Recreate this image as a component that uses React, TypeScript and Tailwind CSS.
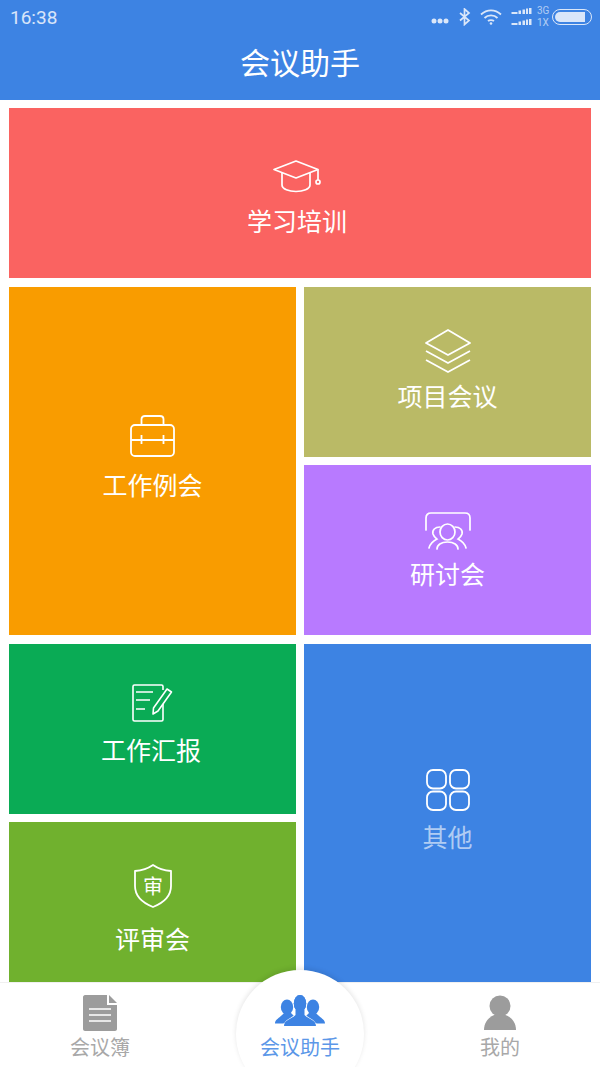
import React from 'react';

const CJK = { fontFamily: '"Noto Sans CJK SC", "Noto Sans", sans-serif' };

const CapIcon = () => (
  <svg width="48" height="33" viewBox="0 0 48 33" fill="none" stroke="white" strokeWidth="1.7" strokeLinejoin="round">
    <path d="M1 9.500 L23 1 L45 9.500 L23 18 Z" />
    <path d="M9 13 V25 C9 29 16 31.500 23 31.500 C30 31.500 37 29 37 25 V13" />
    <path d="M45 9.500 V20" />
    <circle cx="45" cy="22" r="2" />
  </svg>
);

const CaseIcon = () => (
  <svg width="46" height="42" viewBox="0 0 46 42" fill="none" stroke="white" strokeWidth="1.8">
    <rect x="1" y="10" width="43" height="31" rx="4" />
    <path d="M11.500 10 V4 C11.500 2 13 1 15 1 H30 C32 1 33.500 2 33.500 4 V10" />
    <path d="M1 25 H44" />
    <path d="M11.500 20 V29 M33.500 20 V29" />
  </svg>
);

const LayersIcon = () => (
  <svg width="46" height="44" viewBox="0 0 46 44" fill="none" stroke="white" strokeWidth="1.8" strokeLinejoin="round">
    <path d="M23 1 L45 14 L23 26 L1 14 Z" />
    <path d="M1 22 L23 34 L45 22" />
    <path d="M1 31 L23 43 L45 31" />
  </svg>
);

const TeamIcon = () => (
  <svg width="46" height="42" viewBox="0 0 46 42" fill="none" stroke="white" strokeWidth="1.7" strokeLinecap="round">
    <path d="M1 18 V6 C1 3 3 1 6 1 H40 C43 1 45 3 45 6 V18" />
    <ellipse cx="22.500" cy="20" rx="7.500" ry="8" />
    <path d="M12 37 C12 33 16 30 22.500 30 C29 30 33 33 33 37" />
    <path d="M15 15 C10 15 7 18 8 22 C9 25 11 26 12 27 C8 29 5 32 4 36" />
    <path d="M30 15 C35 15 38 18 37 22 C36 25 34 26 33 27 C37 29 40 32 41 36" />
  </svg>
);

const ReportIcon = () => (
  <svg width="41" height="38" viewBox="0 0 41 38" fill="none" stroke="white" strokeWidth="1.6" strokeLinejoin="round">
    <path d="M31 20 V35.500 C31 36.500 30.500 37 29.500 37 H2.500 C1.500 37 1 36.500 1 35.500 V2.500 C1 1.500 1.500 1 2.500 1 H29.500 C30.500 1 31 1.500 31 2.500 V6" />
    <path d="M4 8 H21 M4 16 H18 M4 25 H13" />
    <path d="M35 5 L39.500 8 L26 27 L21 30 L21.500 24 Z" />
  </svg>
);

const ShieldIcon = () => (
  <svg width="38" height="44" viewBox="0 0 38 44" fill="none" stroke="white" strokeWidth="1.8" strokeLinejoin="round">
    <path d="M19 1 C24 4.500 30 6.500 37 7 V22 C37 32 29 39 19 43 C9 39 1 32 1 22 V7 C8 6.500 14 4.500 19 1 Z" />
    <text x="19" y="30" fontSize="20" textAnchor="middle" fill="white" stroke="none" style={CJK}>审</text>
  </svg>
);

const GridIcon = () => (
  <svg width="44" height="42" viewBox="0 0 44 42" fill="none" stroke="white" strokeWidth="1.8">
    <rect x="1" y="1" width="19" height="18.500" rx="6" />
    <rect x="24" y="1" width="19" height="18.500" rx="6" />
    <rect x="1" y="22.500" width="19" height="18.500" rx="6" />
    <rect x="24" y="22.500" width="19" height="18.500" rx="6" />
  </svg>
);

const Tile = ({ label, icon, className, labelClass }: { label: string; icon: React.ReactNode; className: string; labelClass: string }) => (
  <div className={`flex flex-col items-center ${className}`}>
    {icon}
    <div className={`text-[25px] leading-[36px] ${labelClass}`} style={CJK}>{label}</div>
  </div>
);

const StatusBar = () => (
  <div className="h-[33px] flex items-center justify-between pl-[10px] pr-[8px] text-white/80">
    <span className="text-[19px] mt-[3px]" style={{ fontFamily: 'Roboto, sans-serif' }}>16:38</span>
    <div className="flex items-center">
      <svg className="mt-[8px]" width="18" height="6" viewBox="0 0 18 6" fill="#dbe7f9"><circle cx="3" cy="3" r="2.500" /><circle cx="9" cy="3" r="2.500" /><circle cx="15" cy="3" r="2.500" /></svg>
      <svg className="ml-[10px]" width="12" height="18" viewBox="0 0 12 18" fill="none" stroke="#dbe7f9" strokeWidth="1.700"><path d="M1 5 L10 12.500 L5.500 16.500 V1 L10 5 L1 12.500" /></svg>
      <svg className="ml-[9px]" width="22" height="16" viewBox="0 0 22 16" fill="none" stroke="#dbe7f9" strokeWidth="1.800">
        <path d="M1 5.500 C7 0 15 0 21 5.500" />
        <path d="M4.500 9 C8 5.500 14 5.500 17.500 9" />
        <path d="M8 12 C9.500 10.800 12.500 10.800 14 12" />
        <circle cx="11" cy="14.500" r="1.300" fill="#dbe7f9" stroke="none" />
      </svg>
      <div className="ml-[9px] flex flex-col gap-[5px]">
        {[0, 1].map(i => (
          <svg key={i} width="21" height="6" viewBox="0 0 20 6" fill="#dbe7f9">
            <rect x="0" y="4" width="6" height="2" />
            <rect x="7" y="2.500" width="2.500" height="3.500" />
            <rect x="11" y="1.500" width="2.500" height="4.500" />
            <rect x="14.500" y="0.500" width="2" height="5.500" />
            <rect x="17.500" y="0" width="2.500" height="6" />
          </svg>
        ))}
      </div>
      <div className="ml-[5px] w-[11px] flex flex-col text-[10px] leading-[12px] text-white/60" style={{ fontFamily: 'Roboto, sans-serif' }}>
        <span>3G</span>
        <span>1X</span>
      </div>
      <div className="ml-[4px] w-[40px] h-[16px] rounded-full border border-[#dbe7f9] p-[2px]">
        <div className="h-full w-[30px] rounded-l-full rounded-r-[5px] bg-[#d9e6fa]" />
      </div>
    </div>
  </div>
);

const TabBar = () => (
  <div className="relative h-[85px] bg-white border-t border-[#f0f0f0]">
    <div className="absolute left-[236px] top-[-13px] w-[128px] h-[128px] rounded-full bg-white shadow-[0_-2px_5px_rgba(0,0,0,0.1)]" />
    <div className="absolute inset-x-0 top-[-1px] grid grid-cols-[200px_200px_200px] h-[85px]">
      <div className="flex flex-col items-center pt-[13px]">
        <svg width="34" height="36" viewBox="0 0 34 36">
          <path d="M2 0 H24 V10 H34 V34 C34 35 33 36 32 36 H2 C1 36 0 35 0 34 V2 C0 1 1 0 2 0 Z" fill="#9c9c9c" />
          <path d="M26 0 L34 8 H26 Z" fill="#9c9c9c" />
          <path d="M6 14 H28 M6 20 H28 M6 26 H28" stroke="white" strokeWidth="1.600" />
        </svg>
        <span className="text-[20px] leading-[28px] mt-[2px] text-[#a8a8a8]" style={CJK}>会议簿</span>
      </div>
      <div className="relative flex flex-col items-center pt-[13px]">
        <svg width="50" height="31" viewBox="0 0 50 31" fill="#3d83e3">
          <ellipse cx="12" cy="12" rx="6.200" ry="7.500" />
          <path d="M0 28.500 C0 24 5 23 9 18 L16 18 L22 24 L8 28.500 Z" />
          <ellipse cx="38" cy="12" rx="6.200" ry="7.500" />
          <path d="M50 28.500 C50 24 45 23 41 18 L34 18 L28 24 L42 28.500 Z" />
          <ellipse cx="25" cy="8.500" rx="6.200" ry="8.500" stroke="white" strokeWidth="1.200" paintOrder="stroke" />
          <path d="M9 31 C9 25 16 24.500 20.500 20 V15 H29.500 V20 C34 24.500 41 25 41 31 Z" stroke="white" strokeWidth="1.200" paintOrder="stroke" />
          <ellipse cx="25" cy="8.500" rx="6.200" ry="8.500" />
        </svg>
        <span className="text-[20px] leading-[28px] mt-[7px] text-[#5b97e8]" style={CJK}>会议助手</span>
      </div>
      <div className="flex flex-col items-center pt-[13px]">
        <svg width="32" height="36" viewBox="0 0 32 36" fill="#9c9c9c">
          <circle cx="16" cy="11" r="10.500" />
          <path d="M0 35 C0 26 7 19 16 19 C25 19 32 26 32 35 Z" />
        </svg>
        <span className="text-[20px] leading-[28px] mt-[2px] text-[#a8a8a8]" style={CJK}>我的</span>
      </div>
    </div>
  </div>
);

export default function App() {
  return (
    <div className="w-[600px] h-[1067px] flex flex-col overflow-hidden bg-white" style={CJK}>
      <div className="h-[100px] bg-[#3d83e3]">
        <StatusBar />
        <div className="text-center text-white text-[30px] leading-[40px] mt-[8px]" style={CJK}>会议助手</div>
      </div>

      <div className="flex-1 overflow-hidden px-[9px] pt-[8px] grid grid-cols-[287px_287px] grid-rows-[170px_170px_170px_170px_161px] gap-x-[8px] gap-y-[8.5px]">
        <Tile className="col-span-2 bg-[#fa6361] pt-[52px] pr-[6px]" labelClass="mt-[9px] text-white" label="学习培训" icon={<CapIcon />} />
        <Tile className="row-span-2 bg-[#f99c00] pt-[128px]" labelClass="mt-[9px] text-white" label="工作例会" icon={<CaseIcon />} />
        <Tile className="bg-[#baba66] pt-[42px]" labelClass="mt-[4px] text-white" label="项目会议" icon={<LayersIcon />} />
        <Tile className="bg-[#b87aff] pt-[47px]" labelClass="mt-[1px] text-white" label="研讨会" icon={<TeamIcon />} />
        <Tile className="bg-[#0aab55] pt-[40px]" labelClass="mt-[9px] mr-[3px] text-white" label="工作汇报" icon={<ReportIcon />} />
        <Tile className="row-span-2 bg-[#3d83e3] pt-[125px]" labelClass="mt-[7px] text-white/60" label="其他" icon={<GridIcon />} />
        <Tile className="bg-[#70b12e] pt-[42px]" labelClass="mt-[12px] text-white" label="评审会" icon={<ShieldIcon />} />
      </div>

      <TabBar />
    </div>
  );
}
